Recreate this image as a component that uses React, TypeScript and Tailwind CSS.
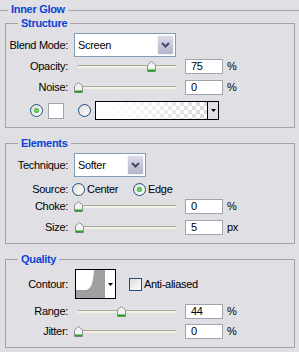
import React from 'react';

// Photoshop "Inner Glow" layer style panel

const Label = ({ children }: { children: React.ReactNode }) => (
  <span className="w-[62px] shrink-0 text-right">{children}</span>
);

function Tri() {
  return (
    <svg width="5" height="3" viewBox="0 0 5 3">
      <path d="M0 0 H5 L2.5 3 Z" fill="#000" />
    </svg>
  );
}

function Radio({ checked = false, className = '' }: { checked?: boolean; className?: string }) {
  return (
    <div
      className={`flex h-[13px] w-[13px] shrink-0 items-center justify-center rounded-full border border-[#1c5180] bg-[linear-gradient(135deg,#dcdcd7,#fff)] ${className}`}
    >
      {checked && <div className="h-[5px] w-[5px] rounded-full bg-[radial-gradient(circle,#7be07b,#21a121)]" />}
    </div>
  );
}

function Select({ value, className = '' }: { value: string; className?: string }) {
  return (
    <div className={`flex h-[24px] border border-[#7f9db9] bg-white p-px ${className}`}>
      <span className="flex-1 self-center pl-[2px]">{value}</span>
      <div className="flex w-[17px] items-center justify-center rounded-[2px] border border-[#f2f2f7] bg-[linear-gradient(#d9dbe6,#b3b6c9)]">
        <svg width="9" height="6" viewBox="0 0 9 6">
          <path d="M1 1 L4.5 4.5 L8 1" fill="none" stroke="#46486a" strokeWidth="2" />
        </svg>
      </div>
    </div>
  );
}

function SliderRow({
  label,
  value,
  frac,
  unit,
  className = '',
}: {
  label: string;
  value: number;
  frac: number;
  unit: string;
  className?: string;
}) {
  return (
    <div className={`flex h-[15px] items-center ${className}`}>
      <Label>{label}</Label>
      <div className="relative ml-[9px] flex h-[11px] w-[100px] items-center">
        <div className="h-[3px] w-full rounded-full border-t border-[#aaa99e] bg-[#f3f1e3]" />
        {/* thumb */}
        <svg
          width="9"
          height="11"
          viewBox="0 0 9 11"
          className="absolute top-0"
          style={{ left: frac * 98 + 1 - 4.5 }}
        >
          <path d="M0.5 4 L4.5 0.5 L8.5 4 V10.5 H0.5 Z" fill="#f3f3f3" stroke="#8d8e8e" />
          <rect x="1" y="8.5" width="7" height="2" fill="#21a121" />
        </svg>
      </div>
      <div className="ml-[8px] h-[15px] w-[38px] border border-[#9fa4ad] bg-white pl-[5px] leading-[13px]">
        {value}
      </div>
      <span className="ml-[4px]">{unit}</span>
    </div>
  );
}

function Group({
  title,
  className = '',
  children,
}: {
  title: string;
  className?: string;
  children: React.ReactNode;
}) {
  return (
    <fieldset className={`ml-[5px] w-[290px] border border-[#a4a3a8] ${className}`}>
      <legend className="ml-[12px] px-[3px] font-bold leading-[13px] text-[#0c43d6]">{title}</legend>
      <div className="flex flex-col">{children}</div>
    </fieldset>
  );
}

export default function App() {
  return (
    <div className="h-[352px] w-[299px] overflow-hidden bg-[#e0dfe3] font-['Liberation_Sans',Arial,sans-serif] text-[11px] leading-[13px] tracking-[-0.3px] text-black">
      {/* header */}
      <div className="flex h-[17px] pt-[3px]">
        <div className="mt-[7px] h-px w-[8px] bg-[#a4a3a8]" />
        <span className="px-[3px] font-bold text-[#0c43d6]">Inner Glow</span>
        <div className="mt-[7px] h-px flex-1 bg-[#a4a3a8]" />
      </div>

      <Group title="Structure" className="h-[111px]">
        <div className="mt-[3px] flex h-[24px] items-center">
          <Label>Blend Mode:</Label>
          <Select value="Screen" className="ml-[6px] w-[102px]" />
        </div>
        <SliderRow className="mt-[2px]" label="Opacity:" value={75} frac={0.75} unit="%" />
        <SliderRow className="mt-[6px]" label="Noise:" value={0} frac={0} unit="%" />
        <div className="mt-[6px] flex h-[19px] items-center pl-[24px]">
          <Radio checked />
          <div className="ml-[5px] h-[16px] w-[16px] border border-[#9fa4ad] bg-white" />
          <Radio className="ml-[14px]" />
          <div className="ml-[4px] flex h-[19px] w-[124px] border border-black">
            <div className="flex-1 bg-[image:repeating-conic-gradient(#dadada_0_25%,#fff_0_50%)] bg-[length:8px_8px]">
              <div className="h-full w-full bg-[image:linear-gradient(to_right,#fff_12%,rgba(255,255,255,0))]" />
            </div>
            <div className="flex w-[11px] items-center justify-center border-l border-black bg-[#e0dfe3]">
              <Tri />
            </div>
          </div>
        </div>
      </Group>

      <Group title="Elements" className="mt-[9px] h-[107px]">
        <div className="mt-[3px] flex h-[24px] items-center">
          <Label>Technique:</Label>
          <Select value="Softer" className="ml-[6px] w-[72px]" />
        </div>
        <div className="mt-[5px] flex h-[14px] items-center">
          <Label>Source:</Label>
          <Radio className="ml-[4px]" />
          <span className="ml-[2px] w-[44px]">Center</span>
          <Radio checked className="ml-[2px]" />
          <span className="ml-[2px]">Edge</span>
        </div>
        <SliderRow className="mt-[3px]" label="Choke:" value={0} frac={0} unit="%" />
        <SliderRow className="mt-[6px]" label="Size:" value={5} frac={0.02} unit="px" />
      </Group>

      <Group title="Quality" className="mt-[9px] h-[95px]">
        <div className="mt-[3px] flex h-[30px] items-center">
          <Label>Contour:</Label>
          <div className="ml-[7px] flex h-[30px] w-[41px] border border-black bg-white">
            <svg width="29" height="28" viewBox="0 0 29 28">
              <path d="M0 28 V20 H9 C15 20 17 14 18 0 H29 V28 Z" fill="#a0a0a0" />
            </svg>
            <div className="flex flex-1 items-center justify-center">
              <Tri />
            </div>
          </div>
          <div className="ml-[13px] h-[13px] w-[13px] border border-[#1c5180] bg-[linear-gradient(135deg,#dcdcd7,#fff)]" />
          <span className="ml-[2px]">Anti-aliased</span>
        </div>
        <SliderRow className="mt-[5px]" label="Range:" value={44} frac={0.44} unit="%" />
        <SliderRow className="mt-[5px]" label="Jitter:" value={0} frac={0} unit="%" />
      </Group>
    </div>
  );
}
